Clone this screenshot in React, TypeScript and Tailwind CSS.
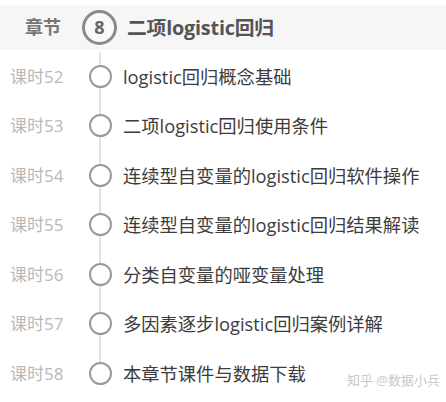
import React from "react";

const rows = [
  ["课时52", "logistic回归概念基础"],
  ["课时53", "二项logistic回归使用条件"],
  ["课时54", "连续型自变量的logistic回归软件操作"],
  ["课时55", "连续型自变量的logistic回归结果解读"],
  ["课时56", "分类自变量的哑变量处理"],
  ["课时57", "多因素逐步logistic回归案例详解"],
  ["课时58", "本章节课件与数据下载"],
];

const font = { fontFamily: '"Open Sans", "Noto Sans CJK SC", sans-serif' };

export default function App() {
  return (
    <div className="w-[446px] h-[402px] bg-white relative overflow-hidden" style={font}>
      <div className="mt-[5px] h-[45px] bg-[#f6f6f6] flex items-center">
        <div className="w-[82px] pl-[25px] text-[18px] font-bold text-[#777]">章节</div>
        <div className="w-[35px] h-[35px] rounded-full border-[3px] border-[#8a8a8a] flex items-center justify-center text-[18px] font-bold text-[#666] bg-[#f9f9f9]">8</div>
        <div className="ml-[10px] text-[19.8px] font-bold text-[#555] tracking-[-0.2px]">二项logistic回归</div>
      </div>
      <div className="flex flex-col mt-[1.5px]">
        {rows.map(([k, t], i) => (
          <div key={k} className="flex items-stretch h-[49.5px]">
            <div className="w-[88px] pl-[10px] flex items-center text-[17px] text-[#b8b8b8]">{k}</div>
            <div className="w-[24px] flex flex-col items-center">
              <div className="w-[2px] flex-1 bg-[#e2e2e2]" />
              <div className="w-[23px] h-[23px] rounded-full border-[2.5px] border-[#9a9a9a] bg-white shrink-0" />
              <div className={`w-[2px] flex-1 ${i === rows.length - 1 ? "bg-transparent" : "bg-[#e2e2e2]"}`} />
            </div>
            <div className="ml-[11px] flex items-center text-[18.3px] text-[#3c3c3c] whitespace-nowrap">{t}</div>
          </div>
        ))}
      </div>
      <div className="absolute right-[6px] bottom-[12px] text-[13px] text-[#c8c8c8]">知乎 @数据小兵</div>
    </div>
  );
}
